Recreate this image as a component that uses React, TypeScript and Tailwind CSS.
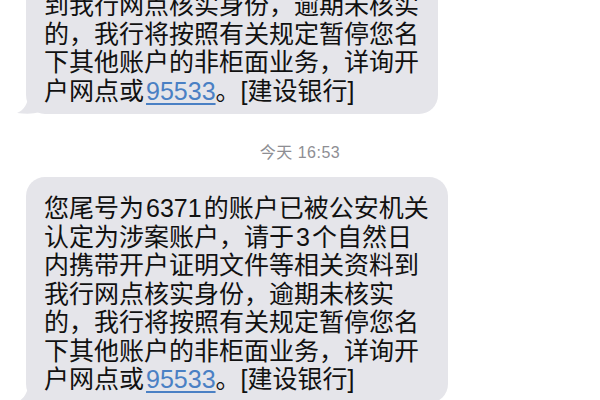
import React from "react";

const Tail = () => (
  <svg
    className="absolute left-[-9px] bottom-0"
    width="22"
    height="22"
    viewBox="0 0 22 22"
  >
    <path d="M12 0 L22 0 L22 20 C17 22 9 22 0 21 C7 18 11 12 12 0 Z" fill="#e5e5ea" />
  </svg>
);

const Link = () => (
  <span className="ml-[2px] text-[#4a80c4] underline decoration-[1.5px] underline-offset-[3px]">95533</span>
);

const Bubble = ({ lines, className = "" }: { lines: React.ReactNode[]; className?: string }) => (
  <div className={`relative ml-[26px] w-fit rounded-[19px] bg-[#e5e5ea] pl-[18px] pr-[19px] pt-[17px] pb-[9px] ${className}`}>
    <Tail />
    <div className="relative text-[25px] leading-[28.5px] text-[#111111] whitespace-nowrap">
      {lines.map((l, i) => (
        <div key={i}>{l}</div>
      ))}
    </div>
  </div>
);

export default function App() {
  const tail = [
    "的，我行将按照有关规定暂停您名",
    "下其他账户的非柜面业务，详询开",
    <>
      户网点或<Link />。[建设银行]
    </>,
  ];
  return (
    <div
      className="w-[600px] h-[400px] overflow-hidden bg-white flex flex-col"
      style={{ fontFamily: '"Liberation Sans", "Noto Sans CJK SC", sans-serif' }}
    >
      <Bubble className="-mt-[26px]" lines={["到我行网点核实身份，逾期未核实", ...tail]} />
      <div className="mt-[29px] text-center text-[16px] leading-[20px] tracking-[0.5px] text-[#8e8e93]">今天 16:53</div>
      <Bubble
        className="mt-[14px] shrink-0"
        lines={[
          <>您尾号为<span className="mx-[2px]">6371</span>的账户已被公安机关</>,
          <>认定为涉案账户，请于<span className="mx-[2px]">3</span>个自然日</>,
          "内携带开户证明文件等相关资料到",
          "我行网点核实身份，逾期未核实",
          ...tail,
        ]}
      />
    </div>
  );
}
